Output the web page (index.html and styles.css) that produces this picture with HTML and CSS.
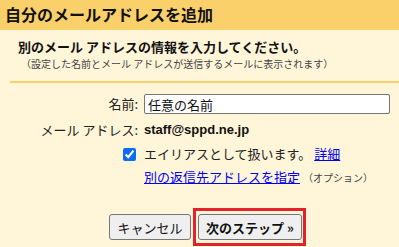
FILE: index.html
```html
<!DOCTYPE html>
<html lang="ja">
<head>
    <meta charset="UTF-8">
    <meta name="viewport" content="width=device-width, initial-scale=1.0">
    <title>自分のメールアドレスを追加</title>
    <link rel="stylesheet" href="styles.css">
</head>
<body>

<div class="header">自分のメールアドレスを追加</div>

<div class="intro">
    <h2>別のメール アドレスの情報を入力してください。</h2>
    <p>（設定した名前とメール アドレスが送信するメールに表示されます）</p>
</div>

<form class="form">
    <div class="row row-name">
        <label class="label" for="name">名前:</label>
        <div class="value"><input type="text" id="name" class="text-input" value="任意の名前"></div>
    </div>
    <div class="row row-mail">
        <span class="label">メール アドレス:</span>
        <div class="value address">staff@sppd.ne.jp</div>
    </div>
    <div class="row row-alias">
        <span class="label"><input type="checkbox" id="alias" class="check" checked></span>
        <div class="value"><label for="alias">エイリアスとして扱います。</label> <a href="#">詳細</a></div>
    </div>
    <div class="row row-reply">
        <span class="label"></span>
        <div class="value"><a href="#">別の返信先アドレスを指定</a> <span class="optional">（オプション）</span></div>
    </div>

    <div class="buttons">
        <button type="button" class="btn btn-cancel">キャンセル</button>
        <span class="highlight"><button type="button" class="btn btn-next">次のステップ »</button></span>
    </div>
</form>

</body>
</html>
```

FILE: styles.css
```css
body {
    margin: 0;
    background: #fff5d9;
    font-family: "Noto Sans CJK JP", "Noto Sans", sans-serif;
    color: #222;
    font-size: 13px;
}
.header {
    height: 30px;
    line-height: 29px;
    padding-left: 5px;
    background: #f9d06a;
    font-size: 16px;
    font-weight: bold;
    color: #111;
}
.intro {
    padding: 8px 0 0 18px;
    height: 43px;
}
.intro h2 {
    margin: 0;
    font-size: 13px;
    line-height: 18px;
    font-weight: bold;
    color: #111;
}
.intro p {
    margin: 0 0 0 3px;
    font-size: 10px;
    line-height: 16px;
    color: #444;
}
.form {
    margin: 0 0 0 10px;
    border-top: 2px solid #f9d06a;
}
.row {
    display: grid;
    grid-template-columns: 128px 1fr;
    column-gap: 6px;
    height: 20px;
    align-items: center;
    line-height: 20px;
}
.row-name { margin-top: 11px; }
.row-mail { margin-top: 6px; }
.row-alias { margin-top: 4px; }
.row-reply { margin-top: 3px; }
.label {
    text-align: right;
    display: flex;
    justify-content: flex-end;
    align-items: center;
}
.value {
    padding-right: 9px;
}
.text-input {
    box-sizing: border-box;
    width: 100%;
    height: 20px;
    padding: 0 3px;
    border: 1px solid #767676;
    border-radius: 2px;
    font-family: inherit;
    font-size: 13px;
    color: #111;
    background: #fff;
}
.address {
    font-family: "Liberation Sans", Arial, sans-serif;
    font-weight: bold;
    font-size: 13px;
    color: #111;
}
.check {
    margin: 0 2px 0 0;
    width: 13px;
    height: 13px;
    accent-color: #0b6cf5;
}
a {
    color: #0000ee;
}
.optional {
    font-size: 10px;
    color: #444;
}
.buttons {
    display: flex;
    justify-content: center;
    align-items: center;
    gap: 2px;
    margin-top: 21px;
    padding-left: 6px;
}
.btn {
    height: 26px;
    padding: 0 6px;
    border: 1px solid #767676;
    border-radius: 3px;
    background: #efefef;
    font-family: inherit;
    font-size: 13px;
    color: #111;
}
.btn-cancel {
    width: 82px;
}
.highlight {
    display: inline-flex;
    border: 3px solid #e3232b;
    padding: 3px 1px 3px 2px;
}
.btn-next {
    font-weight: bold;
    width: 104px;
}
```
